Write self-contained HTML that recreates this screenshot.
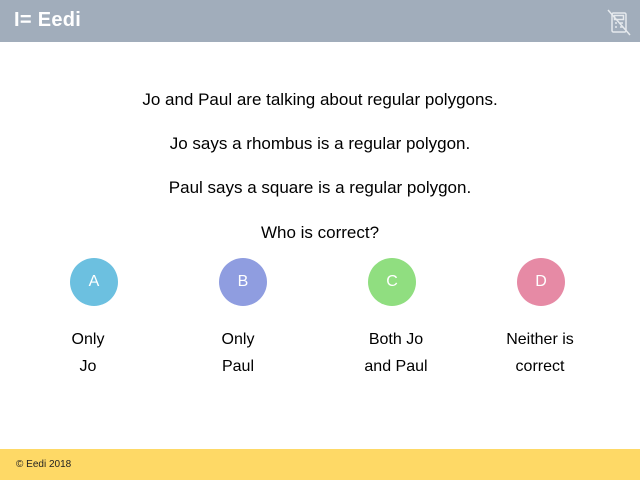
<!DOCTYPE html>
<html><head><meta charset="utf-8"><style>
body{margin:0;width:640px;height:480px;position:relative;background:#fff;font-family:"Liberation Sans",sans-serif;overflow:hidden}
.hdr{position:absolute;left:0;top:0;width:640px;height:42px;background:#a1adbb}
.logo{position:absolute;left:14px;top:9px;color:#fff;font-weight:bold;font-size:20px;letter-spacing:0.3px}
.ftr{position:absolute;left:0;top:449px;width:640px;height:31px;background:#fed966}
.ftr span{position:absolute;left:16px;top:10px;font-size:10px;color:#222}
.t{position:absolute;left:0;width:640px;text-align:center;font-size:17px;color:#000}
.c{position:absolute;width:48px;height:48px;border-radius:50%;color:#fff;font-size:16px;text-align:center;line-height:48px;top:258px}
.l{position:absolute;width:140px;text-align:center;font-size:16px;line-height:27px;top:326px;color:#000}
</style></head><body>
<div class="hdr"><div class="logo">I= Eedi</div>
<svg style="position:absolute;left:605px;top:8px" width="28" height="28" viewBox="0 0 28 28" fill="none" stroke="#e6eaee" stroke-width="1.5">
<rect x="7" y="5" width="14" height="19" rx="1.5"/><rect x="9.5" y="7.5" width="9" height="4"/>
<path d="M10 15h2M15 15h3M10 19h2M15 19h3"/><path d="M3 2L25 27"/></svg></div>
<div class="t" style="top:90px">Jo and Paul are talking about regular polygons.</div>
<div class="t" style="top:134px">Jo says a rhombus is a regular polygon.</div>
<div class="t" style="top:178px">Paul says a square is a regular polygon.</div>
<div class="t" style="top:223px">Who is correct?</div>
<div class="c" style="left:70px;background:#6cc0e0">A</div>
<div class="c" style="left:219px;background:#8f9de0">B</div>
<div class="c" style="left:368px;background:#90de80">C</div>
<div class="c" style="left:517px;background:#e68aa5">D</div>
<div class="l" style="left:18px">Only<br>Jo</div>
<div class="l" style="left:168px">Only<br>Paul</div>
<div class="l" style="left:326px">Both Jo<br>and Paul</div>
<div class="l" style="left:470px">Neither is<br>correct</div>
<div class="ftr"><span>© Eedi 2018</span></div>
</body></html>
